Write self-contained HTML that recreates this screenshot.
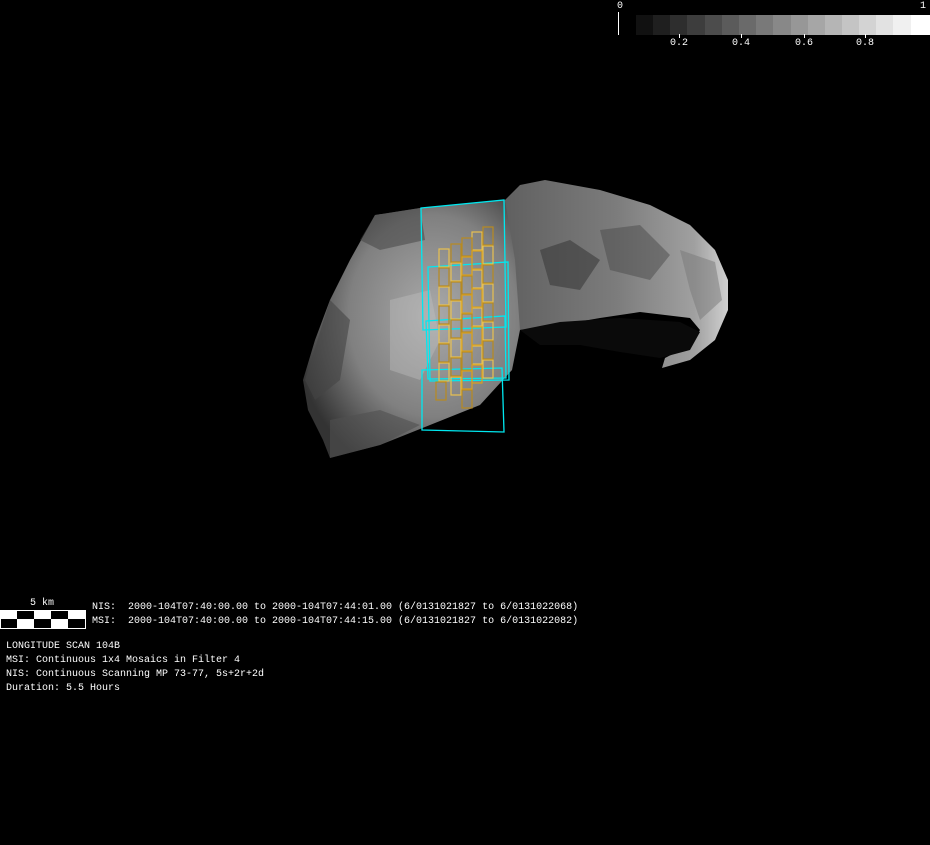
<!DOCTYPE html>
<html><head><meta charset="utf-8"><style>
html,body{margin:0;padding:0;background:#000;width:930px;height:845px;overflow:hidden}
.t{position:absolute;font-family:"Liberation Mono",monospace;font-size:10px;color:#fff;white-space:pre;line-height:12px}
</style></head><body>
<svg width="930" height="845" style="position:absolute;left:0;top:0">
<defs>
<radialGradient id="g1" cx="0.6" cy="0.45" r="0.65">
<stop offset="0" stop-color="#aaa"/><stop offset="0.6" stop-color="#808080"/><stop offset="1" stop-color="#333"/>
</radialGradient>
<linearGradient id="g2" x1="0" y1="0" x2="1" y2="0">
<stop offset="0" stop-color="#606060"/><stop offset="0.5" stop-color="#7c7c7c"/><stop offset="0.85" stop-color="#a0a0a0"/><stop offset="1" stop-color="#d0d0d0"/>
</linearGradient>
</defs>
<path d="M505,200 L520,185 L545,180 L600,190 L650,205 L690,225 L715,250 L728,280 L728,310 L715,340 L690,360 L662,368 L665,358 L690,345 L700,330 L690,318 L640,312 L600,318 L560,325 L520,330 L505,300 Z" fill="url(#g2)"/>
<path d="M540,250 L570,240 L600,260 L580,290 L550,285 Z" fill="#3a3a3a" opacity="0.6"/>
<path d="M600,230 L640,225 L670,255 L650,280 L610,270 Z" fill="#4a4a4a" opacity="0.5"/>
<path d="M680,250 L715,262 L722,300 L700,320 L690,290 Z" fill="#777" opacity="0.5"/>
<path d="M520,330 L560,322 L620,318 L680,322 L700,332 L690,350 L660,358 L620,352 L580,345 L540,345 Z" fill="#0a0a0a"/>
<path d="M375,215 L420,208 L505,200 L515,260 L520,330 L512,370 L480,405 L430,425 L380,445 L330,458 L323,440 L308,410 L303,380 L315,340 L330,300 L350,260 Z" fill="url(#g1)"/>
<path d="M390,300 L430,290 L440,340 L420,380 L390,370 Z" fill="#c0c0c0" opacity="0.4"/>
<path d="M330,300 L350,320 L340,380 L315,400 L305,380 Z" fill="#444" opacity="0.6"/>
<path d="M375,215 L420,208 L425,240 L380,250 L360,240 Z" fill="#404040" opacity="0.5"/>
<path d="M330,420 L380,410 L420,425 L380,445 L330,458 Z" fill="#505050" opacity="0.6"/>
<g fill="none" stroke="#00e8f0" stroke-width="1.3">
<path d="M421,208 L504,200 L506,327 L423,330 Z"/>
<path d="M428,267 L508,262 L509,380 L430,381 Z"/>
<path d="M426,321 L505,316 L506,378 L428,379 Z"/>
<path d="M422,370 L502,368 L504,432 L422,430 Z"/>
</g>
<g fill="none" stroke-width="1.2">
<g stroke="#e8c050">
<rect x="439" y="249" width="10" height="18"/><rect x="439" y="287" width="10" height="18"/><rect x="439" y="325" width="10" height="18"/><rect x="439" y="363" width="10" height="18"/>
<rect x="451" y="263" width="10" height="18"/><rect x="451" y="301" width="10" height="18"/><rect x="451" y="339" width="10" height="18"/><rect x="451" y="377" width="10" height="18"/>
<rect x="472" y="232" width="10" height="18"/><rect x="472" y="270" width="10" height="18"/><rect x="472" y="308" width="10" height="18"/><rect x="472" y="346" width="10" height="18"/>
<rect x="483" y="246" width="10" height="18"/><rect x="483" y="284" width="10" height="18"/><rect x="483" y="322" width="10" height="18"/><rect x="483" y="360" width="10" height="18"/>
</g>
<g stroke="#b88a20">
<rect x="439" y="268" width="10" height="18"/><rect x="439" y="306" width="10" height="18"/><rect x="439" y="344" width="10" height="18"/><rect x="436" y="382" width="10" height="18"/>
<rect x="451" y="244" width="10" height="18"/><rect x="451" y="282" width="10" height="18"/><rect x="451" y="320" width="10" height="18"/><rect x="451" y="358" width="10" height="18"/>
<rect x="462" y="238" width="10" height="18"/><rect x="462" y="276" width="10" height="18"/><rect x="462" y="314" width="10" height="18"/><rect x="462" y="352" width="10" height="18"/><rect x="462" y="390" width="10" height="18"/>
<rect x="483" y="227" width="10" height="18"/><rect x="483" y="265" width="10" height="18"/><rect x="483" y="303" width="10" height="18"/><rect x="483" y="341" width="10" height="18"/>
</g>
<g stroke="#d8a020">
<rect x="462" y="257" width="10" height="18"/><rect x="462" y="295" width="10" height="18"/><rect x="462" y="333" width="10" height="18"/><rect x="462" y="371" width="10" height="18"/>
<rect x="472" y="251" width="10" height="18"/><rect x="472" y="289" width="10" height="18"/><rect x="472" y="327" width="10" height="18"/><rect x="472" y="365" width="10" height="18"/>
</g>
</g>
<g>
<rect x="636" y="15" width="18" height="20" fill="#111"/><rect x="653" y="15" width="18" height="20" fill="#1f1f1f"/><rect x="670" y="15" width="18" height="20" fill="#2e2e2e"/><rect x="687" y="15" width="18" height="20" fill="#3d3d3d"/><rect x="705" y="15" width="18" height="20" fill="#4c4c4c"/><rect x="722" y="15" width="18" height="20" fill="#5b5b5b"/><rect x="739" y="15" width="18" height="20" fill="#6a6a6a"/><rect x="756" y="15" width="18" height="20" fill="#797979"/><rect x="773" y="15" width="18" height="20" fill="#888"/><rect x="791" y="15" width="18" height="20" fill="#979797"/><rect x="808" y="15" width="18" height="20" fill="#a6a6a6"/><rect x="825" y="15" width="18" height="20" fill="#b5b5b5"/><rect x="842" y="15" width="18" height="20" fill="#c4c4c4"/><rect x="859" y="15" width="18" height="20" fill="#d3d3d3"/><rect x="876" y="15" width="18" height="20" fill="#e2e2e2"/><rect x="893" y="15" width="18" height="20" fill="#f0f0f0"/><rect x="911" y="15" width="19" height="20" fill="#fff"/>
<line x1="618.5" y1="12" x2="618.5" y2="35" stroke="#fff"/>
<line x1="679.5" y1="34" x2="679.5" y2="38" stroke="#fff"/><line x1="741.5" y1="34" x2="741.5" y2="38" stroke="#fff"/><line x1="804.5" y1="34" x2="804.5" y2="38" stroke="#fff"/><line x1="865.5" y1="34" x2="865.5" y2="38" stroke="#fff"/>
</g>
<rect x="0.5" y="610.5" width="85" height="18" fill="#000" stroke="#fff"/>
<g fill="#fff">
<rect x="0" y="611" width="17" height="8"/><rect x="34" y="611" width="17" height="8"/><rect x="68" y="611" width="17" height="8"/>
<rect x="17" y="619" width="17" height="9"/><rect x="51" y="619" width="17" height="9"/>
</g>
</svg>
<div class="t" style="left:617px;top:1px">0</div>
<div class="t" style="left:920px;top:1px">1</div>
<div class="t" style="left:670px;top:38px">0.2</div>
<div class="t" style="left:732px;top:38px">0.4</div>
<div class="t" style="left:795px;top:38px">0.6</div>
<div class="t" style="left:856px;top:38px">0.8</div>
<div class="t" style="left:30px;top:598px">5 km</div>
<div class="t" style="left:92px;top:602px">NIS:  2000-104T07:40:00.00 to 2000-104T07:44:01.00 (6/0131021827 to 6/0131022068)</div>
<div class="t" style="left:92px;top:616px">MSI:  2000-104T07:40:00.00 to 2000-104T07:44:15.00 (6/0131021827 to 6/0131022082)</div>
<div class="t" style="left:6px;top:640px;line-height:14px">LONGITUDE SCAN 104B
MSI: Continuous 1x4 Mosaics in Filter 4
NIS: Continuous Scanning MP 73-77, 5s+2r+2d
Duration: 5.5 Hours</div>
</body></html>
